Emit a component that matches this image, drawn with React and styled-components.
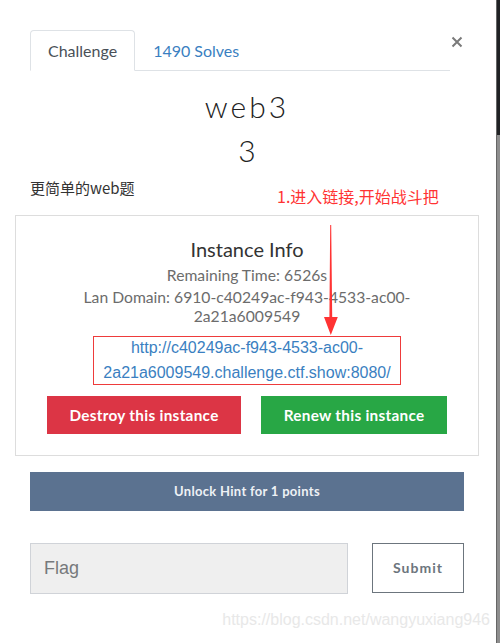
import React from 'react';
import styled, { createGlobalStyle } from 'styled-components';

const GlobalStyle = createGlobalStyle`
	html, body {
		margin: 0;
		padding: 0;
		background: #ffffff;
	}
	* {
		box-sizing: border-box;
	}
`;

const Page = styled.div`
	display: flex;
	width: 500px;
	height: 643px;
	overflow: hidden;
	font-family: Lato, 'Noto Sans', sans-serif;
	color: #212529;
`;

const Main = styled.div`
	position: relative;
	flex: 1;
	min-width: 0;
	display: flex;
	flex-direction: column;
	padding: 30px 32px 0 30px;
`;

const Scrollbar = styled.div`
	width: 4px;
	display: flex;
	flex-direction: column;
	background: #8e8e8e;
	border-left: 1px solid #666;
`;

const ScrollThumb = styled.div`
	height: 135px;
	background: #202224;
`;

const Header = styled.div`
	display: flex;
	align-items: flex-start;
`;

const TabList = styled.div`
	display: flex;
	width: 420px;
	height: 41px;
	border-bottom: 1px solid #dee2e6;
`;

const Tab = styled.div`
	display: flex;
	align-items: center;
	height: 41px;
	padding: 0 17px;
	font-size: 16px;
	border: 1px solid ${({ $active }) => ($active ? '#dee2e6' : 'transparent')};
	border-bottom-color: ${({ $active }) => ($active ? '#ffffff' : 'transparent')};
	border-radius: 4px 4px 0 0;
	color: ${({ $active }) => ($active ? '#495057' : '#3a7fc1')};
	background: ${({ $active }) => ($active ? '#ffffff' : 'transparent')};
`;

const Close = styled.div`
	display: flex;
	margin: 6px 0 0 1px;
	color: #7a7a7a;
`;

const Title = styled.h2`
	margin: 17px 0 0;
	text-align: center;
	font-size: 30px;
	font-weight: 300;
	letter-spacing: 3px;
	line-height: 1.2;
	color: #222;
`;

const Value = styled.h3`
	margin: 8px 0 0;
	text-align: center;
	font-size: 30px;
	font-weight: 300;
	line-height: 1.2;
	color: #222;
`;

const Description = styled.p`
	margin: 9px 0 0;
	font-family: 'Noto Sans CJK SC', sans-serif;
	font-size: 15px;
	font-weight: 400;
	line-height: 22.5px;
	color: #333;
`;

const Note = styled.div`
	position: absolute;
	left: 277px;
	top: 186px;
	font-family: 'Noto Sans CJK SC', sans-serif;
	font-size: 16px;
	line-height: 20px;
	color: #ff3333;
	white-space: nowrap;
`;

const Arrow = styled.svg`
	position: absolute;
	left: 323px;
	top: 225px;
`;

const InstanceBox = styled.div`
	margin: 15px -15px 0;
	padding: 21px 28px 21px;
	border: 1px solid #dddddd;
	text-align: center;
`;

const BoxTitle = styled.h4`
	margin: 0;
	font-size: 20px;
	font-weight: 400;
	line-height: 24px;
	color: #333;
`;

const InfoLine = styled.p`
	margin: ${({ $first }) => ($first ? '5px' : '3px')} 0 0;
	font-size: 15.7px;
	line-height: 19px;
	color: #6c6c6c;
`;

const LinkBox = styled.div`
	width: 308px;
	margin: 10px auto 0;
	border: 1px solid #ee3b3b;
	line-height: 25px;
`;

const Link = styled.a`
	display: block;
	margin: -2px 0 -1px;
	font-family: 'Liberation Sans', sans-serif;
	font-size: 16px;
	color: #3a7fc1;
	text-decoration: none;
`;

const Buttons = styled.div`
	display: flex;
	justify-content: center;
	gap: 20px;
	margin-top: 11px;
`;

const ActionButton = styled.button`
	flex-shrink: 0;
	height: 38px;
	padding: 0 22.5px;
	border: none;
	border-radius: 0;
	background: ${({ $color }) => $color};
	color: #ffffff;
	font-family: Lato, sans-serif;
	font-size: 15.3px;
	font-weight: 700;
	letter-spacing: 0.3px;
	white-space: nowrap;
`;

const HintButton = styled.button`
	margin-top: 16px;
	height: 39px;
	width: 100%;
	border: none;
	background: #5b7290;
	color: #eef1f5;
	font-family: Lato, sans-serif;
	font-size: 13px;
	font-weight: 700;
	letter-spacing: 0.3px;
`;

const FlagRow = styled.div`
	display: flex;
	gap: 24px;
	margin-top: 32px;
`;

const FlagInput = styled.input`
	width: 318px;
	height: 51px;
	padding: 0 13px;
	border: 1px solid #d0d3d8;
	background: #efefef;
	font-family: 'Liberation Sans', sans-serif;
	font-size: 18px;
	color: #495057;
	outline: none;
	&::placeholder {
		color: #76797c;
	}
`;

const SubmitButton = styled.button`
	width: 92px;
	height: 50px;
	border: 1px solid #6c757d;
	background: #ffffff;
	color: #6c757d;
	font-family: Lato, sans-serif;
	font-size: 14px;
	font-weight: 700;
	letter-spacing: 1px;
`;

const Watermark = styled.div`
	margin: 17px -26px 0 0;
	text-align: right;
	font-family: 'Liberation Sans', sans-serif;
	font-size: 16px;
	color: #e8e8e8;
`;

const App = () => {
	return (
		<>
			<GlobalStyle />
			<Page>
				<Main>
					<Header>
						<TabList>
							<Tab $active>Challenge</Tab>
							<Tab>1490 Solves</Tab>
						</TabList>
						<Close>
							<svg width="12" height="12" viewBox="0 0 12 12">
								<path d="M1.5 1.5L10.5 10.5M10.5 1.5L1.5 10.5" stroke="currentColor" strokeWidth="2" />
							</svg>
						</Close>
					</Header>
					<Title>web3</Title>
					<Value>3</Value>
					<Description>更简单的web题</Description>
					<InstanceBox>
						<BoxTitle>Instance Info</BoxTitle>
						<InfoLine $first>Remaining Time: 6526s</InfoLine>
						<InfoLine>Lan Domain: 6910-c40249ac-f943-4533-ac00-2a21a6009549</InfoLine>
						<LinkBox>
							<Link href="#">http://c40249ac-f943-4533-ac00-2a21a6009549.challenge.ctf.show:8080/</Link>
						</LinkBox>
						<Buttons>
							<ActionButton $color="#dc3545">Destroy this instance</ActionButton>
							<ActionButton $color="#28a745">Renew this instance</ActionButton>
						</Buttons>
					</InstanceBox>
					<HintButton>Unlock Hint for 1 points</HintButton>
					<FlagRow>
						<FlagInput placeholder="Flag" />
						<SubmitButton>Submit</SubmitButton>
					</FlagRow>
					<Watermark>https://blog.csdn.net/wangyuxiang946</Watermark>
					<Note>1.进入链接,开始战斗把</Note>
					<Arrow width="16" height="110" viewBox="0 0 16 110">
						<path d="M7.2 0L8.2 0L9.2 92L14.8 92L7.8 110L1 92L6.4 92Z" fill="#ff3333" />
					</Arrow>
				</Main>
				<Scrollbar>
					<ScrollThumb />
				</Scrollbar>
			</Page>
		</>
	);
};

export default App;
